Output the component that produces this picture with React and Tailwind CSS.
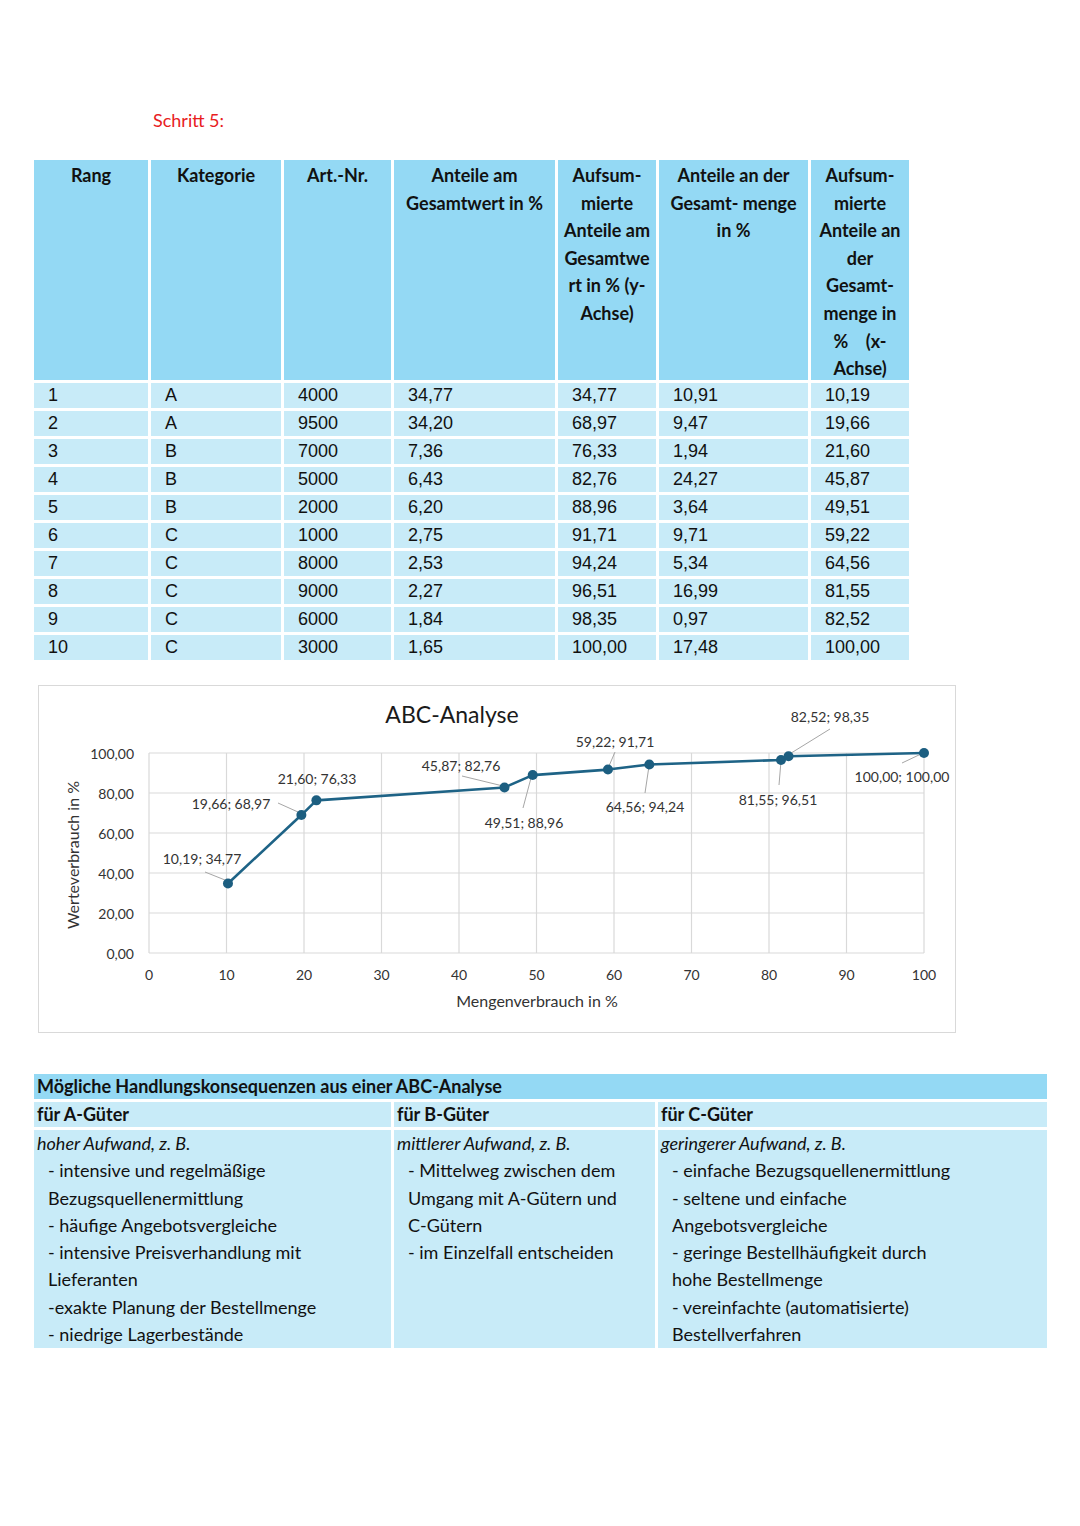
const headers = [
  ['Rang'],
  ['Kategorie'],
  ['Art.-Nr.'],
  ['Anteile am', 'Gesamtwert in %'],
  ['Aufsum-', 'mierte', 'Anteile am', 'Gesamtwe', 'rt in % (y-', 'Achse)'],
  ['Anteile an der', 'Gesamt- menge', 'in %'],
  ['Aufsum-', 'mierte', 'Anteile an', 'der', 'Gesamt-', 'menge in', '%    (x-', 'Achse)'],
];

const rows = [
  ['1', 'A', '4000', '34,77', '34,77', '10,91', '10,19'],
  ['2', 'A', '9500', '34,20', '68,97', '9,47', '19,66'],
  ['3', 'B', '7000', '7,36', '76,33', '1,94', '21,60'],
  ['4', 'B', '5000', '6,43', '82,76', '24,27', '45,87'],
  ['5', 'B', '2000', '6,20', '88,96', '3,64', '49,51'],
  ['6', 'C', '1000', '2,75', '91,71', '9,71', '59,22'],
  ['7', 'C', '8000', '2,53', '94,24', '5,34', '64,56'],
  ['8', 'C', '9000', '2,27', '96,51', '16,99', '81,55'],
  ['9', 'C', '6000', '1,84', '98,35', '0,97', '82,52'],
  ['10', 'C', '3000', '1,65', '100,00', '17,48', '100,00'],
];

const points = [
  [10.19, 34.77], [19.66, 68.97], [21.6, 76.33], [45.87, 82.76], [49.51, 88.96],
  [59.22, 91.71], [64.56, 94.24], [81.55, 96.51], [82.52, 98.35], [100, 100],
];

// label text, center x/y, leader line (or null)
const labels = [
  ['10,19; 34,77', 164, 173, [167, 187, 187, 195]],
  ['19,66; 68,97', 193, 118, [240, 118, 260, 127]],
  ['21,60; 76,33', 279, 93, null],
  ['45,87; 82,76', 423, 80, [424, 91, 465, 101]],
  ['49,51; 88,96', 486, 137, [485, 123, 493, 93]],
  ['59,22; 91,71', 577, 56, [577, 67, 571, 81]],
  ['64,56; 94,24', 607, 121, [607, 108, 611, 81]],
  ['81,55; 96,51', 740, 114, [741, 100, 743, 76]],
  ['82,52; 98,35', 792, 31, [792, 44, 750, 70]],
  ['100,00; 100,00', 864, 91, [864, 78, 883, 69]],
];

const X0 = 111;
const Y0 = 268;
const sx = (v) => X0 + v * 7.75;
const sy = (v) => Y0 - v * 2;

const Chart = () => {
  const line = points.map(([x, y]) => `${sx(x)},${sy(y)}`).join(' ');
  return (
    <div className="ml-[4px] mt-[25px] w-[918px] h-[348px] border border-[#d9d9d9] bg-white">
      <svg width="916" height="346" viewBox="1 1 916 346" style={{ fontFamily: 'Lato, sans-serif' }}>
        <text x="414" y="29" fontSize="23" fill="#1a1a1a" textAnchor="middle" dominantBaseline="central">ABC-Analyse</text>
        {[0, 20, 40, 60, 80, 100].map((v) => (
          <g key={'y' + v}>
            <line x1={X0} x2={sx(100)} y1={sy(v)} y2={sy(v)} stroke="#d9d9d9" strokeWidth="1.2" />
            <text x="96" y={sy(v)} fontSize="14" fill="#333" textAnchor="end" dominantBaseline="central">
              {v === 100 ? '100,00' : v === 0 ? '0,00' : `${v},00`}
            </text>
          </g>
        ))}
        {[0, 10, 20, 30, 40, 50, 60, 70, 80, 90, 100].map((v) => (
          <g key={'x' + v}>
            <line x1={sx(v)} x2={sx(v)} y1={sy(0)} y2={sy(100)} stroke="#d9d9d9" strokeWidth="1.2" />
            <text x={sx(v)} y="289" fontSize="14" fill="#333" textAnchor="middle" dominantBaseline="central">{v}</text>
          </g>
        ))}
        <text x="499" y="315" fontSize="16" fill="#333" textAnchor="middle" dominantBaseline="central">Mengenverbrauch in %</text>
        <text x="34" y="170" fontSize="16" fill="#333" textAnchor="middle" dominantBaseline="central" transform="rotate(-90 34 170)">Werteverbrauch in %</text>
        {labels.map(([t, x, y, l]) => (
          <g key={t}>
            {l && <line x1={l[0]} y1={l[1]} x2={l[2]} y2={l[3]} stroke="#a6a6a6" strokeWidth="1" />}
          </g>
        ))}
        <polyline points={line} fill="none" stroke="#1e6386" strokeWidth="2.6" strokeLinejoin="round" />
        {points.map(([x, y]) => (
          <circle key={x} cx={sx(x)} cy={sy(y)} r="5" fill="#1c5e80" />
        ))}
        {labels.map(([t, x, y]) => (
          <text key={t} x={x} y={y} fontSize="14" fill="#333" textAnchor="middle" dominantBaseline="central">{t}</text>
        ))}
      </svg>
    </div>
  );
};

const Line = ({ children, indent, italic }) => (
  <div className={`whitespace-nowrap ${indent ? 'pl-[11px]' : ''} ${italic ? 'italic' : ''}`}>{children}</div>
);

const colA = ['- intensive und regelmäßige', 'Bezugsquellenermittlung', '- häufige Angebotsvergleiche', '- intensive Preisverhandlung mit', 'Lieferanten', '-exakte Planung der Bestellmenge', '- niedrige Lagerbestände'];
const colB = ['- Mittelweg zwischen dem', 'Umgang mit A-Gütern und', 'C-Gütern', '- im Einzelfall entscheiden'];
const colC = ['- einfache Bezugsquellenermittlung', '- seltene und einfache', 'Angebotsvergleiche', '- geringe Bestellhäufigkeit durch', 'hohe Bestellmenge', '- vereinfachte (automatisierte)', 'Bestellverfahren'];

export default function App() {
  return (
    <div className="w-[1080px] h-[1526px] bg-white pl-[34px] pt-[109px] text-[#111]" style={{ fontFamily: 'Lato, sans-serif' }}>
      <div className="pl-[119px] text-[18px] leading-[22px] text-[#e8201e]">Schritt 5:</div>

      <div className="mt-[29px] grid grid-cols-[114px_130px_107px_161px_98px_149px_98px] gap-[3px] w-[875px]">
        {headers.map((h, i) => (
          <div key={i} className="h-[220px] bg-[#94d9f4] pt-[2px] text-center font-bold text-[18px] leading-[27.6px]">
            {h.map((t) => (
              <div key={t} className="whitespace-pre">{t}</div>
            ))}
          </div>
        ))}
        {rows.map((r, ri) =>
          r.map((c, ci) => (
            <div key={ri + '-' + ci} className="h-[25px] bg-[#c8ebf8] pl-[14px] text-[18px] leading-[25px]" style={{ fontFamily: '"Liberation Sans", Arial, sans-serif' }}>
              {c}
            </div>
          ))
        )}
      </div>

      <Chart />

      <div className="mt-[41px] w-[1013px] text-[18px] text-[#111]">
        <div className="h-[25px] bg-[#94d9f4] pl-[3px] font-bold leading-[25px]">Mögliche Handlungskonsequenzen aus einer ABC-Analyse</div>
        <div className="mt-[3px] grid grid-cols-[357px_261px_389px] gap-[3px]">
          <div className="h-[25px] bg-[#c8ebf8] pl-[3px] font-bold leading-[25px]">für A-Güter</div>
          <div className="h-[25px] bg-[#c8ebf8] pl-[3px] font-bold leading-[25px]">für B-Güter</div>
          <div className="h-[25px] bg-[#c8ebf8] pl-[3px] font-bold leading-[25px]">für C-Güter</div>
          <div className="h-[218px] bg-[#c8ebf8] pl-[3px] leading-[27.3px]">
            <Line italic>hoher Aufwand, z. B.</Line>
            {colA.map((t) => <Line key={t} indent>{t}</Line>)}
          </div>
          <div className="h-[218px] bg-[#c8ebf8] pl-[3px] leading-[27.3px]">
            <Line italic>mittlerer Aufwand, z. B.</Line>
            {colB.map((t) => <Line key={t} indent>{t}</Line>)}
          </div>
          <div className="h-[218px] bg-[#c8ebf8] pl-[3px] leading-[27.3px]">
            <Line italic>geringerer Aufwand, z. B.</Line>
            {colC.map((t) => <Line key={t} indent>{t}</Line>)}
          </div>
        </div>
      </div>
    </div>
  );
}
